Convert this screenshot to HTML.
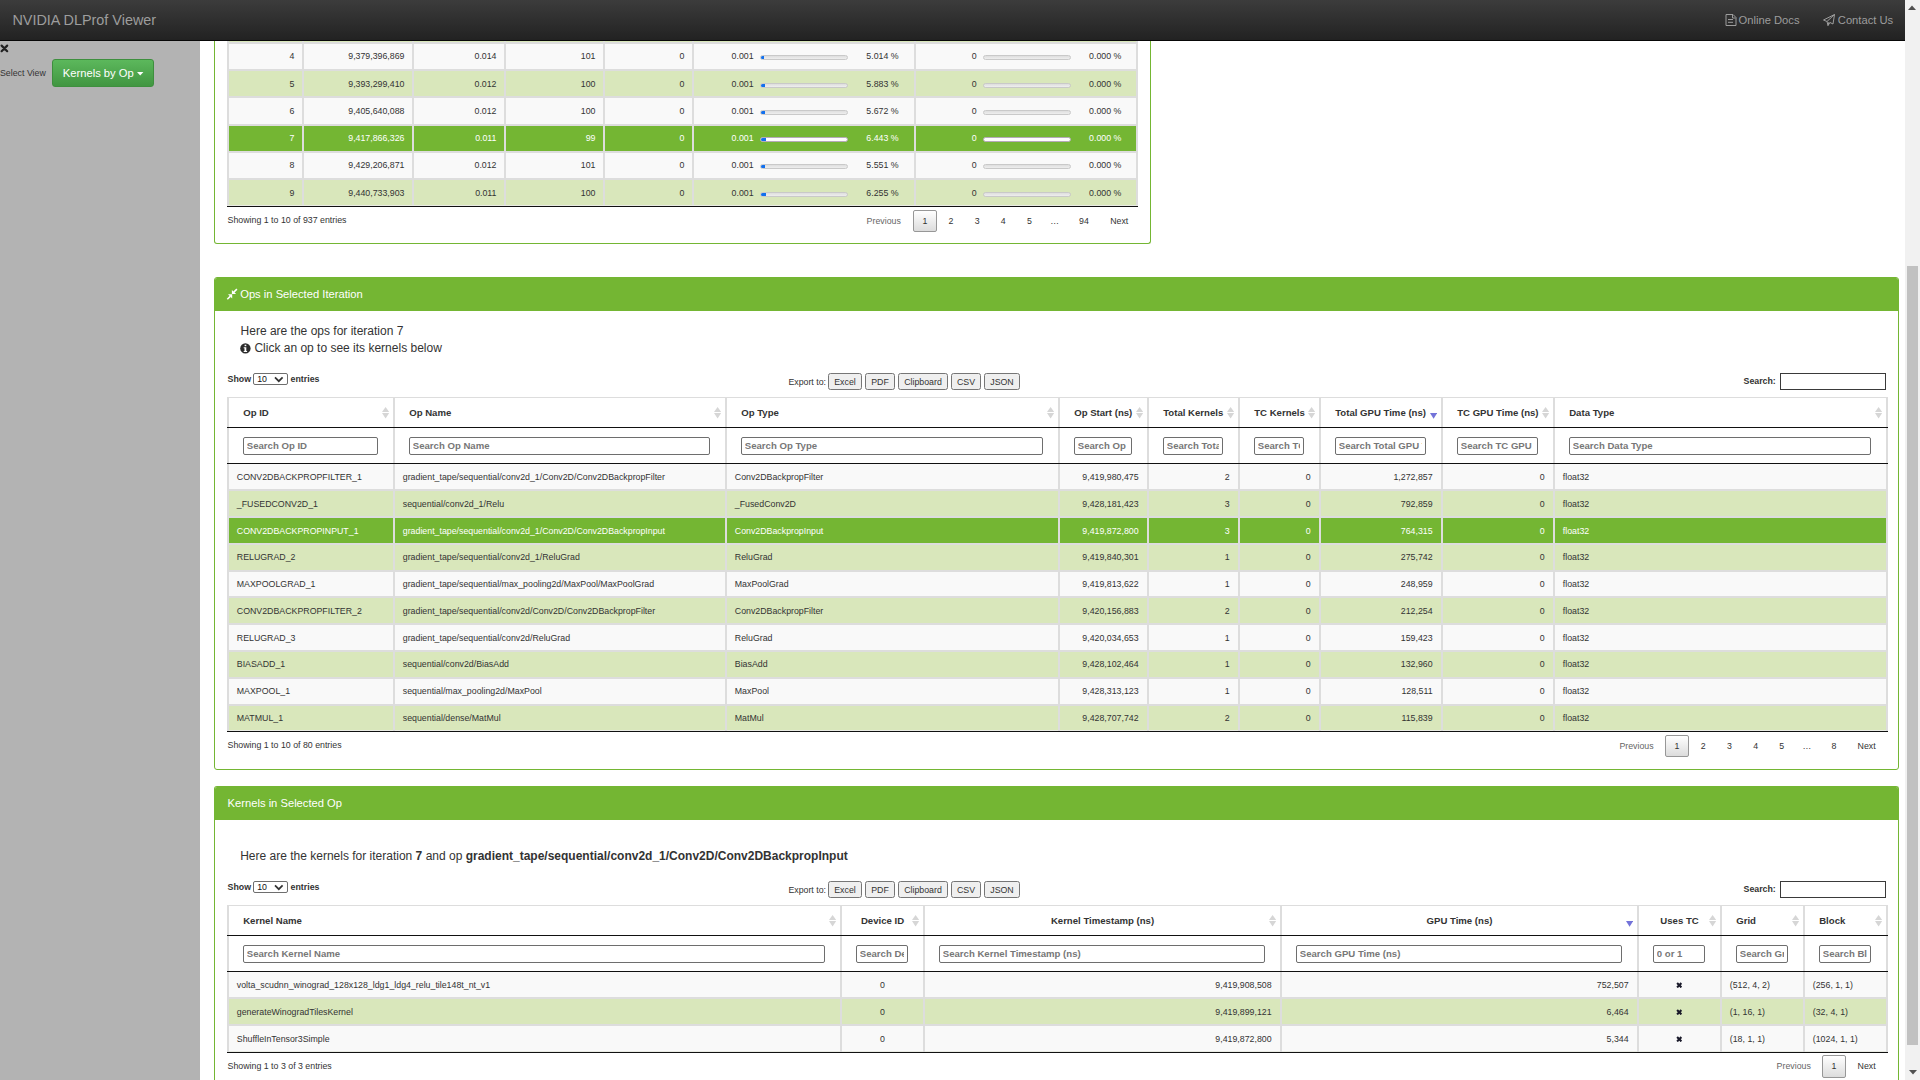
<!DOCTYPE html><html><head><meta charset="utf-8"><title>NVIDIA DLProf Viewer</title><style>
html,body{margin:0;padding:0;width:1920px;height:1080px;overflow:hidden;background:#fff;}
body{position:relative;font-family:"Liberation Sans", sans-serif;}
.t{position:absolute;white-space:nowrap;}
.ib{position:absolute;box-sizing:border-box;border:1px solid #6e6e6e;border-radius:2px;background:#fff;overflow:hidden;height:18px;}
.ib span{position:absolute;left:2.6px;right:2.6px;overflow:hidden;top:2.2px;font-size:9.6px;line-height:11px;font-weight:700;color:#777;white-space:nowrap;}
</style></head><body>
<div style="position:absolute;left:214px;top:0px;width:935px;height:243px;border:1px solid #74b633;border-top:none;border-radius:0 0 3px 3px;background:#fff"></div>
<div style="position:absolute;left:214px;top:277px;width:1683px;height:491px;border:1px solid #74b633;border-radius:3px;background:#fff;overflow:hidden"><div style="position:absolute;left:0;top:0;right:0;height:33px;background:#74b633"></div></div>
<div style="position:absolute;left:214px;top:786px;width:1683px;height:293px;border:1px solid #74b633;border-bottom:none;border-radius:3px 3px 0 0;background:#fff;overflow:hidden"><div style="position:absolute;left:0;top:0;right:0;height:33px;background:#74b633"></div></div>
<div style="position:absolute;left:227px;top:30px;width:911px;height:12px;background:#d9e7bb;"></div>
<div style="position:absolute;left:227px;top:44px;width:911px;height:25px;background:#f9f9f9;"></div>
<div style="position:absolute;left:227px;top:42px;width:911px;height:2px;background:#dddddd;"></div>
<div style="position:absolute;left:227px;top:71px;width:911px;height:25px;background:#d9e7bb;"></div>
<div style="position:absolute;left:227px;top:69px;width:911px;height:2px;background:#dddddd;"></div>
<div style="position:absolute;left:227px;top:98px;width:911px;height:26px;background:#f9f9f9;"></div>
<div style="position:absolute;left:227px;top:96px;width:911px;height:2px;background:#dddddd;"></div>
<div style="position:absolute;left:227px;top:126px;width:911px;height:25px;background:#74b633;"></div>
<div style="position:absolute;left:227px;top:124px;width:911px;height:2px;background:#dddddd;"></div>
<div style="position:absolute;left:227px;top:153px;width:911px;height:25px;background:#f9f9f9;"></div>
<div style="position:absolute;left:227px;top:151px;width:911px;height:2px;background:#dddddd;"></div>
<div style="position:absolute;left:227px;top:180px;width:911px;height:25px;background:#d9e7bb;"></div>
<div style="position:absolute;left:227px;top:178px;width:911px;height:2px;background:#dddddd;"></div>
<div style="position:absolute;left:227px;top:205px;width:911px;height:1px;background:#e9ebe3;"></div>
<div style="position:absolute;left:227px;top:41px;width:2px;height:164px;background:#dddddd;"></div>
<div style="position:absolute;left:302px;top:41px;width:2px;height:164px;background:#dddddd;"></div>
<div style="position:absolute;left:412px;top:41px;width:2px;height:164px;background:#dddddd;"></div>
<div style="position:absolute;left:504px;top:41px;width:2px;height:164px;background:#dddddd;"></div>
<div style="position:absolute;left:603px;top:41px;width:2px;height:164px;background:#dddddd;"></div>
<div style="position:absolute;left:692px;top:41px;width:2px;height:164px;background:#dddddd;"></div>
<div style="position:absolute;left:914px;top:41px;width:2px;height:164px;background:#dddddd;"></div>
<div style="position:absolute;left:1136px;top:41px;width:2px;height:164px;background:#dddddd;"></div>
<div style="position:absolute;left:227px;top:206px;width:911px;height:1px;background:#111;"></div>
<div class="t" style="left:-705.50px;width:1000px;text-align:right;top:51.00px;font-size:8.8px;line-height:10px;color:#333333;font-weight:400;">4</div>
<div class="t" style="left:-595.50px;width:1000px;text-align:right;top:51.00px;font-size:8.8px;line-height:10px;color:#333333;font-weight:400;">9,379,396,869</div>
<div class="t" style="left:-503.50px;width:1000px;text-align:right;top:51.00px;font-size:8.8px;line-height:10px;color:#333333;font-weight:400;">0.014</div>
<div class="t" style="left:-404.50px;width:1000px;text-align:right;top:51.00px;font-size:8.8px;line-height:10px;color:#333333;font-weight:400;">101</div>
<div class="t" style="left:-315.50px;width:1000px;text-align:right;top:51.00px;font-size:8.8px;line-height:10px;color:#333333;font-weight:400;">0</div>
<div class="t" style="left:-246.40px;width:1000px;text-align:right;top:51.00px;font-size:8.8px;line-height:10px;color:#333333;font-weight:400;">0.001</div>
<div class="t" style="left:-101.40px;width:1000px;text-align:right;top:51.00px;font-size:8.8px;line-height:10px;color:#333333;font-weight:400;">5.014 %</div>
<div class="t" style="left:-23.40px;width:1000px;text-align:right;top:51.00px;font-size:8.8px;line-height:10px;color:#333333;font-weight:400;">0</div>
<div class="t" style="left:121.40px;width:1000px;text-align:right;top:51.00px;font-size:8.8px;line-height:10px;color:#333333;font-weight:400;">0.000 %</div>
<div style="position:absolute;left:760px;top:55px;width:88px;height:5px;box-sizing:border-box;background:linear-gradient(#dedede,#eeeeee);border:1px solid #c9c9c9;border-radius:3px;overflow:hidden">
<div style="position:absolute;left:-1px;top:-1px;bottom:-1px;width:4.41px;background:#1170ee;border-radius:3px 0 0 3px"></div>
</div>
<div style="position:absolute;left:983px;top:55px;width:88px;height:5px;box-sizing:border-box;background:linear-gradient(#dedede,#eeeeee);border:1px solid #c9c9c9;border-radius:3px;overflow:hidden">
</div>
<div class="t" style="left:-705.50px;width:1000px;text-align:right;top:79.00px;font-size:8.8px;line-height:10px;color:#333333;font-weight:400;">5</div>
<div class="t" style="left:-595.50px;width:1000px;text-align:right;top:79.00px;font-size:8.8px;line-height:10px;color:#333333;font-weight:400;">9,393,299,410</div>
<div class="t" style="left:-503.50px;width:1000px;text-align:right;top:79.00px;font-size:8.8px;line-height:10px;color:#333333;font-weight:400;">0.012</div>
<div class="t" style="left:-404.50px;width:1000px;text-align:right;top:79.00px;font-size:8.8px;line-height:10px;color:#333333;font-weight:400;">100</div>
<div class="t" style="left:-315.50px;width:1000px;text-align:right;top:79.00px;font-size:8.8px;line-height:10px;color:#333333;font-weight:400;">0</div>
<div class="t" style="left:-246.40px;width:1000px;text-align:right;top:79.00px;font-size:8.8px;line-height:10px;color:#333333;font-weight:400;">0.001</div>
<div class="t" style="left:-101.40px;width:1000px;text-align:right;top:79.00px;font-size:8.8px;line-height:10px;color:#333333;font-weight:400;">5.883 %</div>
<div class="t" style="left:-23.40px;width:1000px;text-align:right;top:79.00px;font-size:8.8px;line-height:10px;color:#333333;font-weight:400;">0</div>
<div class="t" style="left:121.40px;width:1000px;text-align:right;top:79.00px;font-size:8.8px;line-height:10px;color:#333333;font-weight:400;">0.000 %</div>
<div style="position:absolute;left:760px;top:83px;width:88px;height:5px;box-sizing:border-box;background:linear-gradient(#dedede,#eeeeee);border:1px solid #c9c9c9;border-radius:3px;overflow:hidden">
<div style="position:absolute;left:-1px;top:-1px;bottom:-1px;width:5.18px;background:#1170ee;border-radius:3px 0 0 3px"></div>
</div>
<div style="position:absolute;left:983px;top:83px;width:88px;height:5px;box-sizing:border-box;background:linear-gradient(#dedede,#eeeeee);border:1px solid #c9c9c9;border-radius:3px;overflow:hidden">
</div>
<div class="t" style="left:-705.50px;width:1000px;text-align:right;top:106.00px;font-size:8.8px;line-height:10px;color:#333333;font-weight:400;">6</div>
<div class="t" style="left:-595.50px;width:1000px;text-align:right;top:106.00px;font-size:8.8px;line-height:10px;color:#333333;font-weight:400;">9,405,640,088</div>
<div class="t" style="left:-503.50px;width:1000px;text-align:right;top:106.00px;font-size:8.8px;line-height:10px;color:#333333;font-weight:400;">0.012</div>
<div class="t" style="left:-404.50px;width:1000px;text-align:right;top:106.00px;font-size:8.8px;line-height:10px;color:#333333;font-weight:400;">100</div>
<div class="t" style="left:-315.50px;width:1000px;text-align:right;top:106.00px;font-size:8.8px;line-height:10px;color:#333333;font-weight:400;">0</div>
<div class="t" style="left:-246.40px;width:1000px;text-align:right;top:106.00px;font-size:8.8px;line-height:10px;color:#333333;font-weight:400;">0.001</div>
<div class="t" style="left:-101.40px;width:1000px;text-align:right;top:106.00px;font-size:8.8px;line-height:10px;color:#333333;font-weight:400;">5.672 %</div>
<div class="t" style="left:-23.40px;width:1000px;text-align:right;top:106.00px;font-size:8.8px;line-height:10px;color:#333333;font-weight:400;">0</div>
<div class="t" style="left:121.40px;width:1000px;text-align:right;top:106.00px;font-size:8.8px;line-height:10px;color:#333333;font-weight:400;">0.000 %</div>
<div style="position:absolute;left:760px;top:110px;width:88px;height:5px;box-sizing:border-box;background:linear-gradient(#dedede,#eeeeee);border:1px solid #c9c9c9;border-radius:3px;overflow:hidden">
<div style="position:absolute;left:-1px;top:-1px;bottom:-1px;width:4.99px;background:#1170ee;border-radius:3px 0 0 3px"></div>
</div>
<div style="position:absolute;left:983px;top:110px;width:88px;height:5px;box-sizing:border-box;background:linear-gradient(#dedede,#eeeeee);border:1px solid #c9c9c9;border-radius:3px;overflow:hidden">
</div>
<div class="t" style="left:-705.50px;width:1000px;text-align:right;top:133.00px;font-size:8.8px;line-height:10px;color:#fff;font-weight:400;">7</div>
<div class="t" style="left:-595.50px;width:1000px;text-align:right;top:133.00px;font-size:8.8px;line-height:10px;color:#fff;font-weight:400;">9,417,866,326</div>
<div class="t" style="left:-503.50px;width:1000px;text-align:right;top:133.00px;font-size:8.8px;line-height:10px;color:#fff;font-weight:400;">0.011</div>
<div class="t" style="left:-404.50px;width:1000px;text-align:right;top:133.00px;font-size:8.8px;line-height:10px;color:#fff;font-weight:400;">99</div>
<div class="t" style="left:-315.50px;width:1000px;text-align:right;top:133.00px;font-size:8.8px;line-height:10px;color:#fff;font-weight:400;">0</div>
<div class="t" style="left:-246.40px;width:1000px;text-align:right;top:133.00px;font-size:8.8px;line-height:10px;color:#fff;font-weight:400;">0.001</div>
<div class="t" style="left:-101.40px;width:1000px;text-align:right;top:133.00px;font-size:8.8px;line-height:10px;color:#fff;font-weight:400;">6.443 %</div>
<div class="t" style="left:-23.40px;width:1000px;text-align:right;top:133.00px;font-size:8.8px;line-height:10px;color:#fff;font-weight:400;">0</div>
<div class="t" style="left:121.40px;width:1000px;text-align:right;top:133.00px;font-size:8.8px;line-height:10px;color:#fff;font-weight:400;">0.000 %</div>
<div style="position:absolute;left:760px;top:137px;width:88px;height:5px;box-sizing:border-box;background:#fdfdfd;border:1px solid #b5aab8;border-radius:3px;overflow:hidden">
<div style="position:absolute;left:-1px;top:-1px;bottom:-1px;width:5.67px;background:#1170ee;border-radius:3px 0 0 3px"></div>
</div>
<div style="position:absolute;left:983px;top:137px;width:88px;height:5px;box-sizing:border-box;background:#fdfdfd;border:1px solid #b5aab8;border-radius:3px;overflow:hidden">
</div>
<div class="t" style="left:-705.50px;width:1000px;text-align:right;top:160.00px;font-size:8.8px;line-height:10px;color:#333333;font-weight:400;">8</div>
<div class="t" style="left:-595.50px;width:1000px;text-align:right;top:160.00px;font-size:8.8px;line-height:10px;color:#333333;font-weight:400;">9,429,206,871</div>
<div class="t" style="left:-503.50px;width:1000px;text-align:right;top:160.00px;font-size:8.8px;line-height:10px;color:#333333;font-weight:400;">0.012</div>
<div class="t" style="left:-404.50px;width:1000px;text-align:right;top:160.00px;font-size:8.8px;line-height:10px;color:#333333;font-weight:400;">101</div>
<div class="t" style="left:-315.50px;width:1000px;text-align:right;top:160.00px;font-size:8.8px;line-height:10px;color:#333333;font-weight:400;">0</div>
<div class="t" style="left:-246.40px;width:1000px;text-align:right;top:160.00px;font-size:8.8px;line-height:10px;color:#333333;font-weight:400;">0.001</div>
<div class="t" style="left:-101.40px;width:1000px;text-align:right;top:160.00px;font-size:8.8px;line-height:10px;color:#333333;font-weight:400;">5.551 %</div>
<div class="t" style="left:-23.40px;width:1000px;text-align:right;top:160.00px;font-size:8.8px;line-height:10px;color:#333333;font-weight:400;">0</div>
<div class="t" style="left:121.40px;width:1000px;text-align:right;top:160.00px;font-size:8.8px;line-height:10px;color:#333333;font-weight:400;">0.000 %</div>
<div style="position:absolute;left:760px;top:164px;width:88px;height:5px;box-sizing:border-box;background:linear-gradient(#dedede,#eeeeee);border:1px solid #c9c9c9;border-radius:3px;overflow:hidden">
<div style="position:absolute;left:-1px;top:-1px;bottom:-1px;width:4.88px;background:#1170ee;border-radius:3px 0 0 3px"></div>
</div>
<div style="position:absolute;left:983px;top:164px;width:88px;height:5px;box-sizing:border-box;background:linear-gradient(#dedede,#eeeeee);border:1px solid #c9c9c9;border-radius:3px;overflow:hidden">
</div>
<div class="t" style="left:-705.50px;width:1000px;text-align:right;top:188.00px;font-size:8.8px;line-height:10px;color:#333333;font-weight:400;">9</div>
<div class="t" style="left:-595.50px;width:1000px;text-align:right;top:188.00px;font-size:8.8px;line-height:10px;color:#333333;font-weight:400;">9,440,733,903</div>
<div class="t" style="left:-503.50px;width:1000px;text-align:right;top:188.00px;font-size:8.8px;line-height:10px;color:#333333;font-weight:400;">0.011</div>
<div class="t" style="left:-404.50px;width:1000px;text-align:right;top:188.00px;font-size:8.8px;line-height:10px;color:#333333;font-weight:400;">100</div>
<div class="t" style="left:-315.50px;width:1000px;text-align:right;top:188.00px;font-size:8.8px;line-height:10px;color:#333333;font-weight:400;">0</div>
<div class="t" style="left:-246.40px;width:1000px;text-align:right;top:188.00px;font-size:8.8px;line-height:10px;color:#333333;font-weight:400;">0.001</div>
<div class="t" style="left:-101.40px;width:1000px;text-align:right;top:188.00px;font-size:8.8px;line-height:10px;color:#333333;font-weight:400;">6.255 %</div>
<div class="t" style="left:-23.40px;width:1000px;text-align:right;top:188.00px;font-size:8.8px;line-height:10px;color:#333333;font-weight:400;">0</div>
<div class="t" style="left:121.40px;width:1000px;text-align:right;top:188.00px;font-size:8.8px;line-height:10px;color:#333333;font-weight:400;">0.000 %</div>
<div style="position:absolute;left:760px;top:192px;width:88px;height:5px;box-sizing:border-box;background:linear-gradient(#dedede,#eeeeee);border:1px solid #c9c9c9;border-radius:3px;overflow:hidden">
<div style="position:absolute;left:-1px;top:-1px;bottom:-1px;width:5.50px;background:#1170ee;border-radius:3px 0 0 3px"></div>
</div>
<div style="position:absolute;left:983px;top:192px;width:88px;height:5px;box-sizing:border-box;background:linear-gradient(#dedede,#eeeeee);border:1px solid #c9c9c9;border-radius:3px;overflow:hidden">
</div>
<div class="t" style="left:227.60px;top:215.00px;font-size:8.8px;line-height:10px;color:#333333;font-weight:400;">Showing 1 to 10 of 937 entries</div>
<div class="t" style="left:866.60px;top:216.00px;font-size:8.8px;line-height:10px;color:#666;font-weight:400;">Previous</div>
<div style="position:absolute;left:913px;top:210px;width:24px;height:22px;box-sizing:border-box;border:1px solid #979797;border-radius:2px;background:linear-gradient(#ffffff,#dcdcdc)"></div>
<div class="t" style="left:775.00px;width:300.00px;text-align:center;top:216.00px;font-size:8.8px;line-height:10px;color:#333333;font-weight:400;">1</div>
<div class="t" style="left:800.90px;width:300.00px;text-align:center;top:216.00px;font-size:8.8px;line-height:10px;color:#333333;font-weight:400;">2</div>
<div class="t" style="left:827.10px;width:300.00px;text-align:center;top:216.00px;font-size:8.8px;line-height:10px;color:#333333;font-weight:400;">3</div>
<div class="t" style="left:853.30px;width:300.00px;text-align:center;top:216.00px;font-size:8.8px;line-height:10px;color:#333333;font-weight:400;">4</div>
<div class="t" style="left:879.50px;width:300.00px;text-align:center;top:216.00px;font-size:8.8px;line-height:10px;color:#333333;font-weight:400;">5</div>
<div class="t" style="left:904.70px;width:300.00px;text-align:center;top:216.00px;font-size:8.8px;line-height:10px;color:#333333;font-weight:400;">…</div>
<div class="t" style="left:934.00px;width:300.00px;text-align:center;top:216.00px;font-size:8.8px;line-height:10px;color:#333333;font-weight:400;">94</div>
<div class="t" style="left:1110.20px;top:216.00px;font-size:8.8px;line-height:10px;color:#333333;font-weight:400;">Next</div>
<svg style="position:absolute;left:226px;top:288px" width="12" height="12" viewBox="0 0 12 12"><g fill="#fff"><path d="M5.9 1.9 L5.9 6.1 L10.1 6.1 Z"/><path d="M7.6 4.4 L10.9 1.1" stroke="#fff" stroke-width="1.5"/><path d="M2 6.2 L6.2 6.2 L6.2 10.4 Z"/><path d="M4.5 8.1 L1.3 11.3" stroke="#fff" stroke-width="1.5"/></g></svg>
<div class="t" style="left:240.20px;top:288.00px;font-size:11.2px;line-height:12px;color:#fff;font-weight:400;">Ops in Selected Iteration</div>
<div class="t" style="left:227.60px;top:797.00px;font-size:11.2px;line-height:12px;color:#fff;font-weight:400;">Kernels in Selected Op</div>
<div class="t" style="left:240.60px;top:324.00px;font-size:12px;line-height:14px;color:#333333;font-weight:400;">Here are the ops for iteration 7</div>
<svg style="position:absolute;left:240px;top:342.5px" width="11" height="11" viewBox="0 0 11 11"><circle cx="5.4" cy="5.4" r="5.2" fill="#2b2b2b"/><rect x="4.6" y="1.7" width="1.7" height="1.5" fill="#fff"/><path d="M3.7 4.2 H6.3 V7.9 H7.1 V8.9 H3.7 V7.9 H4.5 V5.2 H3.7 Z" fill="#fff"/></svg>
<div class="t" style="left:254.40px;top:341.00px;font-size:12px;line-height:14px;color:#333333;font-weight:400;">Click an op to see its kernels below</div>
<div class="t" style="left:240.20px;top:849.00px;font-size:12px;line-height:14px;color:#333333;font-weight:400;">Here are the kernels for iteration <b>7</b> and op <b>gradient_tape/sequential/conv2d_1/Conv2D/Conv2DBackpropInput</b></div>
<div class="t" style="left:227.60px;top:374.00px;font-size:8.8px;line-height:10px;color:#333333;font-weight:700;">Show</div>
<div style="position:absolute;left:253px;top:373px;width:35px;height:12px;box-sizing:border-box;border:1px solid #6e6e6e;border-radius:2px;background:#fff"></div>
<div class="t" style="left:257.20px;top:374.00px;font-size:8.8px;line-height:10px;color:#111;font-weight:400;">10</div>
<svg style="position:absolute;left:274px;top:375.5px" width="10" height="7" viewBox="0 0 10 7"><path d="M1 1.3 L4.8 5.2 L8.6 1.3" fill="none" stroke="#333" stroke-width="1.7"/></svg>
<div class="t" style="left:290.60px;top:374.00px;font-size:8.8px;line-height:10px;color:#333333;font-weight:700;">entries</div>
<div class="t" style="left:788.40px;top:377.00px;font-size:8.8px;line-height:10px;color:#333333;font-weight:400;">Export to:</div>
<div style="position:absolute;left:828px;top:373px;width:34px;height:17px;box-sizing:border-box;border:1px solid #767676;border-radius:2.5px;background:#efefef"></div>
<div class="t" style="left:695.00px;width:300.00px;text-align:center;top:377.00px;font-size:8.8px;line-height:10px;color:#333333;font-weight:400;">Excel</div>
<div style="position:absolute;left:865px;top:373px;width:30px;height:17px;box-sizing:border-box;border:1px solid #767676;border-radius:2.5px;background:#efefef"></div>
<div class="t" style="left:730.00px;width:300.00px;text-align:center;top:377.00px;font-size:8.8px;line-height:10px;color:#333333;font-weight:400;">PDF</div>
<div style="position:absolute;left:898px;top:373px;width:50px;height:17px;box-sizing:border-box;border:1px solid #767676;border-radius:2.5px;background:#efefef"></div>
<div class="t" style="left:773.00px;width:300.00px;text-align:center;top:377.00px;font-size:8.8px;line-height:10px;color:#333333;font-weight:400;">Clipboard</div>
<div style="position:absolute;left:951px;top:373px;width:30px;height:17px;box-sizing:border-box;border:1px solid #767676;border-radius:2.5px;background:#efefef"></div>
<div class="t" style="left:816.00px;width:300.00px;text-align:center;top:377.00px;font-size:8.8px;line-height:10px;color:#333333;font-weight:400;">CSV</div>
<div style="position:absolute;left:984px;top:373px;width:36px;height:17px;box-sizing:border-box;border:1px solid #767676;border-radius:2.5px;background:#efefef"></div>
<div class="t" style="left:852.00px;width:300.00px;text-align:center;top:377.00px;font-size:8.8px;line-height:10px;color:#333333;font-weight:400;">JSON</div>
<div class="t" style="left:775.80px;width:1000px;text-align:right;top:376.00px;font-size:8.8px;line-height:10px;color:#333333;font-weight:700;">Search:</div>
<div style="position:absolute;left:1780px;top:373px;width:106px;height:17px;box-sizing:border-box;border:1px solid #3a3a3a;background:#fff"></div>
<div class="t" style="left:227.60px;top:882.00px;font-size:8.8px;line-height:10px;color:#333333;font-weight:700;">Show</div>
<div style="position:absolute;left:253px;top:881px;width:35px;height:12px;box-sizing:border-box;border:1px solid #6e6e6e;border-radius:2px;background:#fff"></div>
<div class="t" style="left:257.20px;top:882.00px;font-size:8.8px;line-height:10px;color:#111;font-weight:400;">10</div>
<svg style="position:absolute;left:274px;top:883.5px" width="10" height="7" viewBox="0 0 10 7"><path d="M1 1.3 L4.8 5.2 L8.6 1.3" fill="none" stroke="#333" stroke-width="1.7"/></svg>
<div class="t" style="left:290.60px;top:882.00px;font-size:8.8px;line-height:10px;color:#333333;font-weight:700;">entries</div>
<div class="t" style="left:788.40px;top:885.00px;font-size:8.8px;line-height:10px;color:#333333;font-weight:400;">Export to:</div>
<div style="position:absolute;left:828px;top:881px;width:34px;height:17px;box-sizing:border-box;border:1px solid #767676;border-radius:2.5px;background:#efefef"></div>
<div class="t" style="left:695.00px;width:300.00px;text-align:center;top:885.00px;font-size:8.8px;line-height:10px;color:#333333;font-weight:400;">Excel</div>
<div style="position:absolute;left:865px;top:881px;width:30px;height:17px;box-sizing:border-box;border:1px solid #767676;border-radius:2.5px;background:#efefef"></div>
<div class="t" style="left:730.00px;width:300.00px;text-align:center;top:885.00px;font-size:8.8px;line-height:10px;color:#333333;font-weight:400;">PDF</div>
<div style="position:absolute;left:898px;top:881px;width:50px;height:17px;box-sizing:border-box;border:1px solid #767676;border-radius:2.5px;background:#efefef"></div>
<div class="t" style="left:773.00px;width:300.00px;text-align:center;top:885.00px;font-size:8.8px;line-height:10px;color:#333333;font-weight:400;">Clipboard</div>
<div style="position:absolute;left:951px;top:881px;width:30px;height:17px;box-sizing:border-box;border:1px solid #767676;border-radius:2.5px;background:#efefef"></div>
<div class="t" style="left:816.00px;width:300.00px;text-align:center;top:885.00px;font-size:8.8px;line-height:10px;color:#333333;font-weight:400;">CSV</div>
<div style="position:absolute;left:984px;top:881px;width:36px;height:17px;box-sizing:border-box;border:1px solid #767676;border-radius:2.5px;background:#efefef"></div>
<div class="t" style="left:852.00px;width:300.00px;text-align:center;top:885.00px;font-size:8.8px;line-height:10px;color:#333333;font-weight:400;">JSON</div>
<div class="t" style="left:775.80px;width:1000px;text-align:right;top:884.00px;font-size:8.8px;line-height:10px;color:#333333;font-weight:700;">Search:</div>
<div style="position:absolute;left:1780px;top:881px;width:106px;height:17px;box-sizing:border-box;border:1px solid #3a3a3a;background:#fff"></div>
<div style="position:absolute;left:227px;top:397px;width:1661px;height:1px;background:#dddddd;"></div>
<div style="position:absolute;left:227px;top:464px;width:1661px;height:25px;background:#f9f9f9;"></div>
<div style="position:absolute;left:227px;top:491px;width:1661px;height:25px;background:#d9e7bb;"></div>
<div style="position:absolute;left:227px;top:518px;width:1661px;height:25px;background:#74b633;"></div>
<div style="position:absolute;left:227px;top:545px;width:1661px;height:25px;background:#d9e7bb;"></div>
<div style="position:absolute;left:227px;top:572px;width:1661px;height:24px;background:#f9f9f9;"></div>
<div style="position:absolute;left:227px;top:598px;width:1661px;height:25px;background:#d9e7bb;"></div>
<div style="position:absolute;left:227px;top:625px;width:1661px;height:25px;background:#f9f9f9;"></div>
<div style="position:absolute;left:227px;top:652px;width:1661px;height:25px;background:#d9e7bb;"></div>
<div style="position:absolute;left:227px;top:679px;width:1661px;height:25px;background:#f9f9f9;"></div>
<div style="position:absolute;left:227px;top:706px;width:1661px;height:24px;background:#d9e7bb;"></div>
<div style="position:absolute;left:227px;top:489px;width:1661px;height:2px;background:#dddddd;"></div>
<div style="position:absolute;left:227px;top:516px;width:1661px;height:2px;background:#dddddd;"></div>
<div style="position:absolute;left:227px;top:543px;width:1661px;height:2px;background:#dddddd;"></div>
<div style="position:absolute;left:227px;top:570px;width:1661px;height:2px;background:#dddddd;"></div>
<div style="position:absolute;left:227px;top:596px;width:1661px;height:2px;background:#dddddd;"></div>
<div style="position:absolute;left:227px;top:623px;width:1661px;height:2px;background:#dddddd;"></div>
<div style="position:absolute;left:227px;top:650px;width:1661px;height:2px;background:#dddddd;"></div>
<div style="position:absolute;left:227px;top:677px;width:1661px;height:2px;background:#dddddd;"></div>
<div style="position:absolute;left:227px;top:704px;width:1661px;height:2px;background:#dddddd;"></div>
<div style="position:absolute;left:227px;top:730px;width:1661px;height:1px;background:#e9ebe3;"></div>
<div style="position:absolute;left:227px;top:397px;width:2px;height:334px;background:#dddddd;"></div>
<div style="position:absolute;left:393px;top:397px;width:2px;height:334px;background:#dddddd;"></div>
<div style="position:absolute;left:725px;top:397px;width:2px;height:334px;background:#dddddd;"></div>
<div style="position:absolute;left:1058px;top:397px;width:2px;height:334px;background:#dddddd;"></div>
<div style="position:absolute;left:1147px;top:397px;width:2px;height:334px;background:#dddddd;"></div>
<div style="position:absolute;left:1238px;top:397px;width:2px;height:334px;background:#dddddd;"></div>
<div style="position:absolute;left:1319px;top:397px;width:2px;height:334px;background:#dddddd;"></div>
<div style="position:absolute;left:1441px;top:397px;width:2px;height:334px;background:#dddddd;"></div>
<div style="position:absolute;left:1553px;top:397px;width:2px;height:334px;background:#dddddd;"></div>
<div style="position:absolute;left:1886px;top:397px;width:2px;height:334px;background:#dddddd;"></div>
<div style="position:absolute;left:227px;top:427px;width:1661px;height:1px;background:#111;"></div>
<div style="position:absolute;left:227px;top:463px;width:1661px;height:1px;background:#111;"></div>
<div style="position:absolute;left:227px;top:731px;width:1661px;height:1px;background:#111;"></div>
<div class="t" style="left:243.20px;top:407.00px;font-size:9.6px;line-height:11px;color:#333333;font-weight:700;">Op ID</div>
<svg style="position:absolute;left:381.90px;top:407.00px" width="7.2" height="12" viewBox="0 0 7.2 12"><path d="M3.6 0 L7.2 5 L0 5Z M0 6 L7.2 6 L3.6 11.5Z" fill="#d6d6d6"/></svg>
<div class="ib" style="left:243.2px;top:437px;width:134.5px"><span>Search Op ID</span></div>
<div class="t" style="left:409.20px;top:407.00px;font-size:9.6px;line-height:11px;color:#333333;font-weight:700;">Op Name</div>
<svg style="position:absolute;left:713.90px;top:407.00px" width="7.2" height="12" viewBox="0 0 7.2 12"><path d="M3.6 0 L7.2 5 L0 5Z M0 6 L7.2 6 L3.6 11.5Z" fill="#d6d6d6"/></svg>
<div class="ib" style="left:409.2px;top:437px;width:300.5px"><span>Search Op Name</span></div>
<div class="t" style="left:741.20px;top:407.00px;font-size:9.6px;line-height:11px;color:#333333;font-weight:700;">Op Type</div>
<svg style="position:absolute;left:1046.90px;top:407.00px" width="7.2" height="12" viewBox="0 0 7.2 12"><path d="M3.6 0 L7.2 5 L0 5Z M0 6 L7.2 6 L3.6 11.5Z" fill="#d6d6d6"/></svg>
<div class="ib" style="left:741.2px;top:437px;width:301.5px"><span>Search Op Type</span></div>
<div class="t" style="left:1074.20px;top:407.00px;font-size:9.6px;line-height:11px;color:#333333;font-weight:700;">Op Start (ns)</div>
<svg style="position:absolute;left:1135.90px;top:407.00px" width="7.2" height="12" viewBox="0 0 7.2 12"><path d="M3.6 0 L7.2 5 L0 5Z M0 6 L7.2 6 L3.6 11.5Z" fill="#d6d6d6"/></svg>
<div class="ib" style="left:1074.2px;top:437px;width:57.5px"><span>Search Op Start (ns)</span></div>
<div class="t" style="left:1163.20px;top:407.00px;font-size:9.6px;line-height:11px;color:#333333;font-weight:700;">Total Kernels</div>
<svg style="position:absolute;left:1226.90px;top:407.00px" width="7.2" height="12" viewBox="0 0 7.2 12"><path d="M3.6 0 L7.2 5 L0 5Z M0 6 L7.2 6 L3.6 11.5Z" fill="#d6d6d6"/></svg>
<div class="ib" style="left:1163.2px;top:437px;width:59.5px"><span>Search Total Kernels</span></div>
<div class="t" style="left:1254.20px;top:407.00px;font-size:9.6px;line-height:11px;color:#333333;font-weight:700;">TC Kernels</div>
<svg style="position:absolute;left:1307.90px;top:407.00px" width="7.2" height="12" viewBox="0 0 7.2 12"><path d="M3.6 0 L7.2 5 L0 5Z M0 6 L7.2 6 L3.6 11.5Z" fill="#d6d6d6"/></svg>
<div class="ib" style="left:1254.2px;top:437px;width:49.5px"><span>Search TC Kernels</span></div>
<div class="t" style="left:1335.20px;top:407.00px;font-size:9.6px;line-height:11px;color:#333333;font-weight:700;">Total GPU Time (ns)</div>
<svg style="position:absolute;left:1429.90px;top:413.00px" width="7.2" height="6" viewBox="0 0 7.2 6"><path d="M0 0 L7.2 0 L3.6 5.8Z" fill="#7373d9"/></svg>
<div class="ib" style="left:1335.2px;top:437px;width:90.5px"><span>Search Total GPU Time (ns)</span></div>
<div class="t" style="left:1457.20px;top:407.00px;font-size:9.6px;line-height:11px;color:#333333;font-weight:700;">TC GPU Time (ns)</div>
<svg style="position:absolute;left:1541.90px;top:407.00px" width="7.2" height="12" viewBox="0 0 7.2 12"><path d="M3.6 0 L7.2 5 L0 5Z M0 6 L7.2 6 L3.6 11.5Z" fill="#d6d6d6"/></svg>
<div class="ib" style="left:1457.2px;top:437px;width:80.5px"><span>Search TC GPU Time (ns)</span></div>
<div class="t" style="left:1569.20px;top:407.00px;font-size:9.6px;line-height:11px;color:#333333;font-weight:700;">Data Type</div>
<svg style="position:absolute;left:1874.90px;top:407.00px" width="7.2" height="12" viewBox="0 0 7.2 12"><path d="M3.6 0 L7.2 5 L0 5Z M0 6 L7.2 6 L3.6 11.5Z" fill="#d6d6d6"/></svg>
<div class="ib" style="left:1569.2px;top:437px;width:301.5px"><span>Search Data Type</span></div>
<div class="t" style="left:236.80px;top:472.00px;font-size:8.8px;line-height:10px;color:#333333;font-weight:400;">CONV2DBACKPROPFILTER_1</div>
<div class="t" style="left:402.80px;top:472.00px;font-size:8.8px;line-height:10px;color:#333333;font-weight:400;">gradient_tape/sequential/conv2d_1/Conv2D/Conv2DBackpropFilter</div>
<div class="t" style="left:734.80px;top:472.00px;font-size:8.8px;line-height:10px;color:#333333;font-weight:400;">Conv2DBackpropFilter</div>
<div class="t" style="left:138.60px;width:1000px;text-align:right;top:472.00px;font-size:8.8px;line-height:10px;color:#333333;font-weight:400;">9,419,980,475</div>
<div class="t" style="left:229.60px;width:1000px;text-align:right;top:472.00px;font-size:8.8px;line-height:10px;color:#333333;font-weight:400;">2</div>
<div class="t" style="left:310.60px;width:1000px;text-align:right;top:472.00px;font-size:8.8px;line-height:10px;color:#333333;font-weight:400;">0</div>
<div class="t" style="left:432.60px;width:1000px;text-align:right;top:472.00px;font-size:8.8px;line-height:10px;color:#333333;font-weight:400;">1,272,857</div>
<div class="t" style="left:544.60px;width:1000px;text-align:right;top:472.00px;font-size:8.8px;line-height:10px;color:#333333;font-weight:400;">0</div>
<div class="t" style="left:1562.80px;top:472.00px;font-size:8.8px;line-height:10px;color:#333333;font-weight:400;">float32</div>
<div class="t" style="left:236.80px;top:499.00px;font-size:8.8px;line-height:10px;color:#333333;font-weight:400;">_FUSEDCONV2D_1</div>
<div class="t" style="left:402.80px;top:499.00px;font-size:8.8px;line-height:10px;color:#333333;font-weight:400;">sequential/conv2d_1/Relu</div>
<div class="t" style="left:734.80px;top:499.00px;font-size:8.8px;line-height:10px;color:#333333;font-weight:400;">_FusedConv2D</div>
<div class="t" style="left:138.60px;width:1000px;text-align:right;top:499.00px;font-size:8.8px;line-height:10px;color:#333333;font-weight:400;">9,428,181,423</div>
<div class="t" style="left:229.60px;width:1000px;text-align:right;top:499.00px;font-size:8.8px;line-height:10px;color:#333333;font-weight:400;">3</div>
<div class="t" style="left:310.60px;width:1000px;text-align:right;top:499.00px;font-size:8.8px;line-height:10px;color:#333333;font-weight:400;">0</div>
<div class="t" style="left:432.60px;width:1000px;text-align:right;top:499.00px;font-size:8.8px;line-height:10px;color:#333333;font-weight:400;">792,859</div>
<div class="t" style="left:544.60px;width:1000px;text-align:right;top:499.00px;font-size:8.8px;line-height:10px;color:#333333;font-weight:400;">0</div>
<div class="t" style="left:1562.80px;top:499.00px;font-size:8.8px;line-height:10px;color:#333333;font-weight:400;">float32</div>
<div class="t" style="left:236.80px;top:526.00px;font-size:8.8px;line-height:10px;color:#fff;font-weight:400;">CONV2DBACKPROPINPUT_1</div>
<div class="t" style="left:402.80px;top:526.00px;font-size:8.8px;line-height:10px;color:#fff;font-weight:400;">gradient_tape/sequential/conv2d_1/Conv2D/Conv2DBackpropInput</div>
<div class="t" style="left:734.80px;top:526.00px;font-size:8.8px;line-height:10px;color:#fff;font-weight:400;">Conv2DBackpropInput</div>
<div class="t" style="left:138.60px;width:1000px;text-align:right;top:526.00px;font-size:8.8px;line-height:10px;color:#fff;font-weight:400;">9,419,872,800</div>
<div class="t" style="left:229.60px;width:1000px;text-align:right;top:526.00px;font-size:8.8px;line-height:10px;color:#fff;font-weight:400;">3</div>
<div class="t" style="left:310.60px;width:1000px;text-align:right;top:526.00px;font-size:8.8px;line-height:10px;color:#fff;font-weight:400;">0</div>
<div class="t" style="left:432.60px;width:1000px;text-align:right;top:526.00px;font-size:8.8px;line-height:10px;color:#fff;font-weight:400;">764,315</div>
<div class="t" style="left:544.60px;width:1000px;text-align:right;top:526.00px;font-size:8.8px;line-height:10px;color:#fff;font-weight:400;">0</div>
<div class="t" style="left:1562.80px;top:526.00px;font-size:8.8px;line-height:10px;color:#fff;font-weight:400;">float32</div>
<div class="t" style="left:236.80px;top:552.00px;font-size:8.8px;line-height:10px;color:#333333;font-weight:400;">RELUGRAD_2</div>
<div class="t" style="left:402.80px;top:552.00px;font-size:8.8px;line-height:10px;color:#333333;font-weight:400;">gradient_tape/sequential/conv2d_1/ReluGrad</div>
<div class="t" style="left:734.80px;top:552.00px;font-size:8.8px;line-height:10px;color:#333333;font-weight:400;">ReluGrad</div>
<div class="t" style="left:138.60px;width:1000px;text-align:right;top:552.00px;font-size:8.8px;line-height:10px;color:#333333;font-weight:400;">9,419,840,301</div>
<div class="t" style="left:229.60px;width:1000px;text-align:right;top:552.00px;font-size:8.8px;line-height:10px;color:#333333;font-weight:400;">1</div>
<div class="t" style="left:310.60px;width:1000px;text-align:right;top:552.00px;font-size:8.8px;line-height:10px;color:#333333;font-weight:400;">0</div>
<div class="t" style="left:432.60px;width:1000px;text-align:right;top:552.00px;font-size:8.8px;line-height:10px;color:#333333;font-weight:400;">275,742</div>
<div class="t" style="left:544.60px;width:1000px;text-align:right;top:552.00px;font-size:8.8px;line-height:10px;color:#333333;font-weight:400;">0</div>
<div class="t" style="left:1562.80px;top:552.00px;font-size:8.8px;line-height:10px;color:#333333;font-weight:400;">float32</div>
<div class="t" style="left:236.80px;top:579.00px;font-size:8.8px;line-height:10px;color:#333333;font-weight:400;">MAXPOOLGRAD_1</div>
<div class="t" style="left:402.80px;top:579.00px;font-size:8.8px;line-height:10px;color:#333333;font-weight:400;">gradient_tape/sequential/max_pooling2d/MaxPool/MaxPoolGrad</div>
<div class="t" style="left:734.80px;top:579.00px;font-size:8.8px;line-height:10px;color:#333333;font-weight:400;">MaxPoolGrad</div>
<div class="t" style="left:138.60px;width:1000px;text-align:right;top:579.00px;font-size:8.8px;line-height:10px;color:#333333;font-weight:400;">9,419,813,622</div>
<div class="t" style="left:229.60px;width:1000px;text-align:right;top:579.00px;font-size:8.8px;line-height:10px;color:#333333;font-weight:400;">1</div>
<div class="t" style="left:310.60px;width:1000px;text-align:right;top:579.00px;font-size:8.8px;line-height:10px;color:#333333;font-weight:400;">0</div>
<div class="t" style="left:432.60px;width:1000px;text-align:right;top:579.00px;font-size:8.8px;line-height:10px;color:#333333;font-weight:400;">248,959</div>
<div class="t" style="left:544.60px;width:1000px;text-align:right;top:579.00px;font-size:8.8px;line-height:10px;color:#333333;font-weight:400;">0</div>
<div class="t" style="left:1562.80px;top:579.00px;font-size:8.8px;line-height:10px;color:#333333;font-weight:400;">float32</div>
<div class="t" style="left:236.80px;top:606.00px;font-size:8.8px;line-height:10px;color:#333333;font-weight:400;">CONV2DBACKPROPFILTER_2</div>
<div class="t" style="left:402.80px;top:606.00px;font-size:8.8px;line-height:10px;color:#333333;font-weight:400;">gradient_tape/sequential/conv2d/Conv2D/Conv2DBackpropFilter</div>
<div class="t" style="left:734.80px;top:606.00px;font-size:8.8px;line-height:10px;color:#333333;font-weight:400;">Conv2DBackpropFilter</div>
<div class="t" style="left:138.60px;width:1000px;text-align:right;top:606.00px;font-size:8.8px;line-height:10px;color:#333333;font-weight:400;">9,420,156,883</div>
<div class="t" style="left:229.60px;width:1000px;text-align:right;top:606.00px;font-size:8.8px;line-height:10px;color:#333333;font-weight:400;">2</div>
<div class="t" style="left:310.60px;width:1000px;text-align:right;top:606.00px;font-size:8.8px;line-height:10px;color:#333333;font-weight:400;">0</div>
<div class="t" style="left:432.60px;width:1000px;text-align:right;top:606.00px;font-size:8.8px;line-height:10px;color:#333333;font-weight:400;">212,254</div>
<div class="t" style="left:544.60px;width:1000px;text-align:right;top:606.00px;font-size:8.8px;line-height:10px;color:#333333;font-weight:400;">0</div>
<div class="t" style="left:1562.80px;top:606.00px;font-size:8.8px;line-height:10px;color:#333333;font-weight:400;">float32</div>
<div class="t" style="left:236.80px;top:633.00px;font-size:8.8px;line-height:10px;color:#333333;font-weight:400;">RELUGRAD_3</div>
<div class="t" style="left:402.80px;top:633.00px;font-size:8.8px;line-height:10px;color:#333333;font-weight:400;">gradient_tape/sequential/conv2d/ReluGrad</div>
<div class="t" style="left:734.80px;top:633.00px;font-size:8.8px;line-height:10px;color:#333333;font-weight:400;">ReluGrad</div>
<div class="t" style="left:138.60px;width:1000px;text-align:right;top:633.00px;font-size:8.8px;line-height:10px;color:#333333;font-weight:400;">9,420,034,653</div>
<div class="t" style="left:229.60px;width:1000px;text-align:right;top:633.00px;font-size:8.8px;line-height:10px;color:#333333;font-weight:400;">1</div>
<div class="t" style="left:310.60px;width:1000px;text-align:right;top:633.00px;font-size:8.8px;line-height:10px;color:#333333;font-weight:400;">0</div>
<div class="t" style="left:432.60px;width:1000px;text-align:right;top:633.00px;font-size:8.8px;line-height:10px;color:#333333;font-weight:400;">159,423</div>
<div class="t" style="left:544.60px;width:1000px;text-align:right;top:633.00px;font-size:8.8px;line-height:10px;color:#333333;font-weight:400;">0</div>
<div class="t" style="left:1562.80px;top:633.00px;font-size:8.8px;line-height:10px;color:#333333;font-weight:400;">float32</div>
<div class="t" style="left:236.80px;top:659.00px;font-size:8.8px;line-height:10px;color:#333333;font-weight:400;">BIASADD_1</div>
<div class="t" style="left:402.80px;top:659.00px;font-size:8.8px;line-height:10px;color:#333333;font-weight:400;">sequential/conv2d/BiasAdd</div>
<div class="t" style="left:734.80px;top:659.00px;font-size:8.8px;line-height:10px;color:#333333;font-weight:400;">BiasAdd</div>
<div class="t" style="left:138.60px;width:1000px;text-align:right;top:659.00px;font-size:8.8px;line-height:10px;color:#333333;font-weight:400;">9,428,102,464</div>
<div class="t" style="left:229.60px;width:1000px;text-align:right;top:659.00px;font-size:8.8px;line-height:10px;color:#333333;font-weight:400;">1</div>
<div class="t" style="left:310.60px;width:1000px;text-align:right;top:659.00px;font-size:8.8px;line-height:10px;color:#333333;font-weight:400;">0</div>
<div class="t" style="left:432.60px;width:1000px;text-align:right;top:659.00px;font-size:8.8px;line-height:10px;color:#333333;font-weight:400;">132,960</div>
<div class="t" style="left:544.60px;width:1000px;text-align:right;top:659.00px;font-size:8.8px;line-height:10px;color:#333333;font-weight:400;">0</div>
<div class="t" style="left:1562.80px;top:659.00px;font-size:8.8px;line-height:10px;color:#333333;font-weight:400;">float32</div>
<div class="t" style="left:236.80px;top:686.00px;font-size:8.8px;line-height:10px;color:#333333;font-weight:400;">MAXPOOL_1</div>
<div class="t" style="left:402.80px;top:686.00px;font-size:8.8px;line-height:10px;color:#333333;font-weight:400;">sequential/max_pooling2d/MaxPool</div>
<div class="t" style="left:734.80px;top:686.00px;font-size:8.8px;line-height:10px;color:#333333;font-weight:400;">MaxPool</div>
<div class="t" style="left:138.60px;width:1000px;text-align:right;top:686.00px;font-size:8.8px;line-height:10px;color:#333333;font-weight:400;">9,428,313,123</div>
<div class="t" style="left:229.60px;width:1000px;text-align:right;top:686.00px;font-size:8.8px;line-height:10px;color:#333333;font-weight:400;">1</div>
<div class="t" style="left:310.60px;width:1000px;text-align:right;top:686.00px;font-size:8.8px;line-height:10px;color:#333333;font-weight:400;">0</div>
<div class="t" style="left:432.60px;width:1000px;text-align:right;top:686.00px;font-size:8.8px;line-height:10px;color:#333333;font-weight:400;">128,511</div>
<div class="t" style="left:544.60px;width:1000px;text-align:right;top:686.00px;font-size:8.8px;line-height:10px;color:#333333;font-weight:400;">0</div>
<div class="t" style="left:1562.80px;top:686.00px;font-size:8.8px;line-height:10px;color:#333333;font-weight:400;">float32</div>
<div class="t" style="left:236.80px;top:713.00px;font-size:8.8px;line-height:10px;color:#333333;font-weight:400;">MATMUL_1</div>
<div class="t" style="left:402.80px;top:713.00px;font-size:8.8px;line-height:10px;color:#333333;font-weight:400;">sequential/dense/MatMul</div>
<div class="t" style="left:734.80px;top:713.00px;font-size:8.8px;line-height:10px;color:#333333;font-weight:400;">MatMul</div>
<div class="t" style="left:138.60px;width:1000px;text-align:right;top:713.00px;font-size:8.8px;line-height:10px;color:#333333;font-weight:400;">9,428,707,742</div>
<div class="t" style="left:229.60px;width:1000px;text-align:right;top:713.00px;font-size:8.8px;line-height:10px;color:#333333;font-weight:400;">2</div>
<div class="t" style="left:310.60px;width:1000px;text-align:right;top:713.00px;font-size:8.8px;line-height:10px;color:#333333;font-weight:400;">0</div>
<div class="t" style="left:432.60px;width:1000px;text-align:right;top:713.00px;font-size:8.8px;line-height:10px;color:#333333;font-weight:400;">115,839</div>
<div class="t" style="left:544.60px;width:1000px;text-align:right;top:713.00px;font-size:8.8px;line-height:10px;color:#333333;font-weight:400;">0</div>
<div class="t" style="left:1562.80px;top:713.00px;font-size:8.8px;line-height:10px;color:#333333;font-weight:400;">float32</div>
<div class="t" style="left:227.60px;top:740.00px;font-size:8.8px;line-height:10px;color:#333333;font-weight:400;">Showing 1 to 10 of 80 entries</div>
<div class="t" style="left:1619.40px;top:741.00px;font-size:8.8px;line-height:10px;color:#666;font-weight:400;">Previous</div>
<div style="position:absolute;left:1665px;top:735px;width:24px;height:22px;box-sizing:border-box;border:1px solid #979797;border-radius:2px;background:linear-gradient(#ffffff,#dcdcdc)"></div>
<div class="t" style="left:1527.00px;width:300.00px;text-align:center;top:741.00px;font-size:8.8px;line-height:10px;color:#333333;font-weight:400;">1</div>
<div class="t" style="left:1553.20px;width:300.00px;text-align:center;top:741.00px;font-size:8.8px;line-height:10px;color:#333333;font-weight:400;">2</div>
<div class="t" style="left:1579.40px;width:300.00px;text-align:center;top:741.00px;font-size:8.8px;line-height:10px;color:#333333;font-weight:400;">3</div>
<div class="t" style="left:1605.60px;width:300.00px;text-align:center;top:741.00px;font-size:8.8px;line-height:10px;color:#333333;font-weight:400;">4</div>
<div class="t" style="left:1645.60px;width:272.40px;text-align:center;top:741.00px;font-size:8.8px;line-height:10px;color:#333333;font-weight:400;">5</div>
<div class="t" style="left:1696.00px;width:222.00px;text-align:center;top:741.00px;font-size:8.8px;line-height:10px;color:#333333;font-weight:400;">…</div>
<div class="t" style="left:1750.00px;width:168.00px;text-align:center;top:741.00px;font-size:8.8px;line-height:10px;color:#333333;font-weight:400;">8</div>
<div class="t" style="left:1857.60px;top:741.00px;font-size:8.8px;line-height:10px;color:#333333;font-weight:400;">Next</div>
<div style="position:absolute;left:227px;top:905px;width:1661px;height:1px;background:#dddddd;"></div>
<div style="position:absolute;left:227px;top:972px;width:1661px;height:25px;background:#f9f9f9;"></div>
<div style="position:absolute;left:227px;top:999px;width:1661px;height:25px;background:#d9e7bb;"></div>
<div style="position:absolute;left:227px;top:1026px;width:1661px;height:25px;background:#f9f9f9;"></div>
<div style="position:absolute;left:227px;top:997px;width:1661px;height:2px;background:#dddddd;"></div>
<div style="position:absolute;left:227px;top:1024px;width:1661px;height:2px;background:#dddddd;"></div>
<div style="position:absolute;left:227px;top:1051px;width:1661px;height:1px;background:#e9ebe3;"></div>
<div style="position:absolute;left:227px;top:905px;width:2px;height:147px;background:#dddddd;"></div>
<div style="position:absolute;left:840px;top:905px;width:2px;height:147px;background:#dddddd;"></div>
<div style="position:absolute;left:923px;top:905px;width:2px;height:147px;background:#dddddd;"></div>
<div style="position:absolute;left:1280px;top:905px;width:2px;height:147px;background:#dddddd;"></div>
<div style="position:absolute;left:1637px;top:905px;width:2px;height:147px;background:#dddddd;"></div>
<div style="position:absolute;left:1720px;top:905px;width:2px;height:147px;background:#dddddd;"></div>
<div style="position:absolute;left:1803px;top:905px;width:2px;height:147px;background:#dddddd;"></div>
<div style="position:absolute;left:1886px;top:905px;width:2px;height:147px;background:#dddddd;"></div>
<div style="position:absolute;left:227px;top:935px;width:1661px;height:1px;background:#111;"></div>
<div style="position:absolute;left:227px;top:971px;width:1661px;height:1px;background:#111;"></div>
<div style="position:absolute;left:227px;top:1052px;width:1661px;height:1px;background:#111;"></div>
<div class="t" style="left:243.20px;top:915.00px;font-size:9.6px;line-height:11px;color:#333333;font-weight:700;">Kernel Name</div>
<svg style="position:absolute;left:828.90px;top:915.00px" width="7.2" height="12" viewBox="0 0 7.2 12"><path d="M3.6 0 L7.2 5 L0 5Z M0 6 L7.2 6 L3.6 11.5Z" fill="#d6d6d6"/></svg>
<div class="ib" style="left:243.2px;top:945px;width:581.5px"><span>Search Kernel Name</span></div>
<div class="t" style="left:732.50px;width:300.00px;text-align:center;top:915.00px;font-size:9.6px;line-height:11px;color:#333333;font-weight:700;">Device ID</div>
<svg style="position:absolute;left:911.90px;top:915.00px" width="7.2" height="12" viewBox="0 0 7.2 12"><path d="M3.6 0 L7.2 5 L0 5Z M0 6 L7.2 6 L3.6 11.5Z" fill="#d6d6d6"/></svg>
<div class="ib" style="left:856.2px;top:945px;width:51.5px"><span>Search Device ID</span></div>
<div class="t" style="left:952.50px;width:300.00px;text-align:center;top:915.00px;font-size:9.6px;line-height:11px;color:#333333;font-weight:700;">Kernel Timestamp (ns)</div>
<svg style="position:absolute;left:1268.90px;top:915.00px" width="7.2" height="12" viewBox="0 0 7.2 12"><path d="M3.6 0 L7.2 5 L0 5Z M0 6 L7.2 6 L3.6 11.5Z" fill="#d6d6d6"/></svg>
<div class="ib" style="left:939.2px;top:945px;width:325.5px"><span>Search Kernel Timestamp (ns)</span></div>
<div class="t" style="left:1309.50px;width:300.00px;text-align:center;top:915.00px;font-size:9.6px;line-height:11px;color:#333333;font-weight:700;">GPU Time (ns)</div>
<svg style="position:absolute;left:1625.90px;top:921.00px" width="7.2" height="6" viewBox="0 0 7.2 6"><path d="M0 0 L7.2 0 L3.6 5.8Z" fill="#7373d9"/></svg>
<div class="ib" style="left:1296.2px;top:945px;width:325.5px"><span>Search GPU Time (ns)</span></div>
<div class="t" style="left:1529.50px;width:300.00px;text-align:center;top:915.00px;font-size:9.6px;line-height:11px;color:#333333;font-weight:700;">Uses TC</div>
<svg style="position:absolute;left:1708.90px;top:915.00px" width="7.2" height="12" viewBox="0 0 7.2 12"><path d="M3.6 0 L7.2 5 L0 5Z M0 6 L7.2 6 L3.6 11.5Z" fill="#d6d6d6"/></svg>
<div class="ib" style="left:1653.2px;top:945px;width:51.5px"><span>0 or 1</span></div>
<div class="t" style="left:1736.20px;top:915.00px;font-size:9.6px;line-height:11px;color:#333333;font-weight:700;">Grid</div>
<svg style="position:absolute;left:1791.90px;top:915.00px" width="7.2" height="12" viewBox="0 0 7.2 12"><path d="M3.6 0 L7.2 5 L0 5Z M0 6 L7.2 6 L3.6 11.5Z" fill="#d6d6d6"/></svg>
<div class="ib" style="left:1736.2px;top:945px;width:51.5px"><span>Search Grid</span></div>
<div class="t" style="left:1819.20px;top:915.00px;font-size:9.6px;line-height:11px;color:#333333;font-weight:700;">Block</div>
<svg style="position:absolute;left:1874.90px;top:915.00px" width="7.2" height="12" viewBox="0 0 7.2 12"><path d="M3.6 0 L7.2 5 L0 5Z M0 6 L7.2 6 L3.6 11.5Z" fill="#d6d6d6"/></svg>
<div class="ib" style="left:1819.2px;top:945px;width:51.5px"><span>Search Block</span></div>
<div class="t" style="left:236.80px;top:980.00px;font-size:8.8px;line-height:10px;color:#333333;font-weight:400;">volta_scudnn_winograd_128x128_ldg1_ldg4_relu_tile148t_nt_v1</div>
<div class="t" style="left:732.50px;width:300.00px;text-align:center;top:980.00px;font-size:8.8px;line-height:10px;color:#333333;font-weight:400;">0</div>
<div class="t" style="left:271.60px;width:1000px;text-align:right;top:980.00px;font-size:8.8px;line-height:10px;color:#333333;font-weight:400;">9,419,908,508</div>
<div class="t" style="left:628.60px;width:1000px;text-align:right;top:980.00px;font-size:8.8px;line-height:10px;color:#333333;font-weight:400;">752,507</div>
<svg style="position:absolute;left:1675.75px;top:981.55px" width="6.5" height="6.5" viewBox="0 0 6.5 6.5"><path d="M1.1 1.1 L5.4 5.4 M5.4 1.1 L1.1 5.4" stroke="#1a1a2a" stroke-width="2.1"/></svg>
<div class="t" style="left:1729.80px;top:980.00px;font-size:8.8px;line-height:10px;color:#333333;font-weight:400;">(512, 4, 2)</div>
<div class="t" style="left:1812.80px;top:980.00px;font-size:8.8px;line-height:10px;color:#333333;font-weight:400;">(256, 1, 1)</div>
<div class="t" style="left:236.80px;top:1007.00px;font-size:8.8px;line-height:10px;color:#333333;font-weight:400;">generateWinogradTilesKernel</div>
<div class="t" style="left:732.50px;width:300.00px;text-align:center;top:1007.00px;font-size:8.8px;line-height:10px;color:#333333;font-weight:400;">0</div>
<div class="t" style="left:271.60px;width:1000px;text-align:right;top:1007.00px;font-size:8.8px;line-height:10px;color:#333333;font-weight:400;">9,419,899,121</div>
<div class="t" style="left:628.60px;width:1000px;text-align:right;top:1007.00px;font-size:8.8px;line-height:10px;color:#333333;font-weight:400;">6,464</div>
<svg style="position:absolute;left:1675.75px;top:1008.55px" width="6.5" height="6.5" viewBox="0 0 6.5 6.5"><path d="M1.1 1.1 L5.4 5.4 M5.4 1.1 L1.1 5.4" stroke="#1a1a2a" stroke-width="2.1"/></svg>
<div class="t" style="left:1729.80px;top:1007.00px;font-size:8.8px;line-height:10px;color:#333333;font-weight:400;">(1, 16, 1)</div>
<div class="t" style="left:1812.80px;top:1007.00px;font-size:8.8px;line-height:10px;color:#333333;font-weight:400;">(32, 4, 1)</div>
<div class="t" style="left:236.80px;top:1034.00px;font-size:8.8px;line-height:10px;color:#333333;font-weight:400;">ShuffleInTensor3Simple</div>
<div class="t" style="left:732.50px;width:300.00px;text-align:center;top:1034.00px;font-size:8.8px;line-height:10px;color:#333333;font-weight:400;">0</div>
<div class="t" style="left:271.60px;width:1000px;text-align:right;top:1034.00px;font-size:8.8px;line-height:10px;color:#333333;font-weight:400;">9,419,872,800</div>
<div class="t" style="left:628.60px;width:1000px;text-align:right;top:1034.00px;font-size:8.8px;line-height:10px;color:#333333;font-weight:400;">5,344</div>
<svg style="position:absolute;left:1675.75px;top:1035.55px" width="6.5" height="6.5" viewBox="0 0 6.5 6.5"><path d="M1.1 1.1 L5.4 5.4 M5.4 1.1 L1.1 5.4" stroke="#1a1a2a" stroke-width="2.1"/></svg>
<div class="t" style="left:1729.80px;top:1034.00px;font-size:8.8px;line-height:10px;color:#333333;font-weight:400;">(18, 1, 1)</div>
<div class="t" style="left:1812.80px;top:1034.00px;font-size:8.8px;line-height:10px;color:#333333;font-weight:400;">(1024, 1, 1)</div>
<div class="t" style="left:227.60px;top:1061.00px;font-size:8.8px;line-height:10px;color:#333333;font-weight:400;">Showing 1 to 3 of 3 entries</div>
<div class="t" style="left:1776.60px;top:1061.00px;font-size:8.8px;line-height:10px;color:#666;font-weight:400;">Previous</div>
<div style="position:absolute;left:1822px;top:1055px;width:24px;height:23px;box-sizing:border-box;border:1px solid #979797;border-radius:2px;background:linear-gradient(#ffffff,#dcdcdc)"></div>
<div class="t" style="left:1750.00px;width:168.00px;text-align:center;top:1061.00px;font-size:8.8px;line-height:10px;color:#333333;font-weight:400;">1</div>
<div class="t" style="left:1857.60px;top:1061.00px;font-size:8.8px;line-height:10px;color:#333333;font-weight:400;">Next</div>
<div style="position:absolute;left:0px;top:41px;width:200px;height:1039px;background:#b3b3b3;"></div>
<svg style="position:absolute;left:0px;top:44px" width="10" height="10" viewBox="0 0 10 10"><path d="M1.6 1.6 L7.2 7.2 M7.2 1.6 L1.6 7.2" stroke="#222" stroke-width="2.2" stroke-linecap="round"/></svg>
<div class="t" style="left:0.00px;top:68.00px;font-size:8.8px;line-height:10px;color:#333333;font-weight:400;">Select View</div>
<div style="position:absolute;left:52px;top:59px;width:102px;height:28px;box-sizing:border-box;border:1px solid #3e8f3e;border-radius:3px;background:linear-gradient(#5cb85c,#419641)"></div>
<div class="t" style="left:62.80px;top:67.00px;font-size:11.2px;line-height:12px;color:#fff;font-weight:400;">Kernels by Op</div>
<svg style="position:absolute;left:137px;top:72px" width="7" height="4" viewBox="0 0 7 4"><path d="M0 0 L6.4 0 L3.2 3.4Z" fill="#fff"/></svg>
<div style="position:absolute;left:0px;top:0px;width:1905px;height:40px;background:linear-gradient(#3c3c3c,#222);border-bottom:1px solid #080808;"></div>
<div class="t" style="left:12.40px;top:12.00px;font-size:14.4px;line-height:16px;color:#9d9d9d;font-weight:400;">NVIDIA DLProf Viewer</div>
<svg style="position:absolute;left:1725px;top:14px" width="12" height="12" viewBox="0 0 12 12"><path d="M1 0.5 H8 L11 3.5 V11.5 H1Z" fill="none" stroke="#9d9d9d" stroke-width="1"/><path d="M7.5 1 V4 H10.5" fill="none" stroke="#9d9d9d" stroke-width="1"/><path d="M3 5.5 H8 M3 8.3 H8" stroke="#9d9d9d" stroke-width="1"/></svg>
<div class="t" style="left:1738.60px;top:14.00px;font-size:11.2px;line-height:12px;color:#9d9d9d;font-weight:400;">Online Docs</div>
<svg style="position:absolute;left:1823px;top:14px" width="12" height="12" viewBox="0 0 12 12"><path d="M11.5 0.5 L0.5 6 L4 7.5 L5 11.5 L7 8.5 L10 10 Z M4 7.5 L11.5 0.5 M5 11.5 L6 8" fill="none" stroke="#9d9d9d" stroke-width="1"/></svg>
<div class="t" style="left:1837.80px;top:14.00px;font-size:11.2px;line-height:12px;color:#9d9d9d;font-weight:400;">Contact Us</div>
<div style="position:absolute;left:1905px;top:0px;width:15px;height:1080px;background:#f1f1f1;"></div>
<div style="position:absolute;left:1907px;top:266px;width:11px;height:779px;background:#c1c1c1;"></div>
<svg style="position:absolute;left:1908px;top:5px" width="8" height="5" viewBox="0 0 8 5"><path d="M0 5 L8 5 L4 0.5Z" fill="#505050"/></svg>
<svg style="position:absolute;left:1908.5px;top:1069.5px" width="8" height="5" viewBox="0 0 8 5"><path d="M0 0 L8 0 L4 4.5Z" fill="#505050"/></svg>
</body></html>
